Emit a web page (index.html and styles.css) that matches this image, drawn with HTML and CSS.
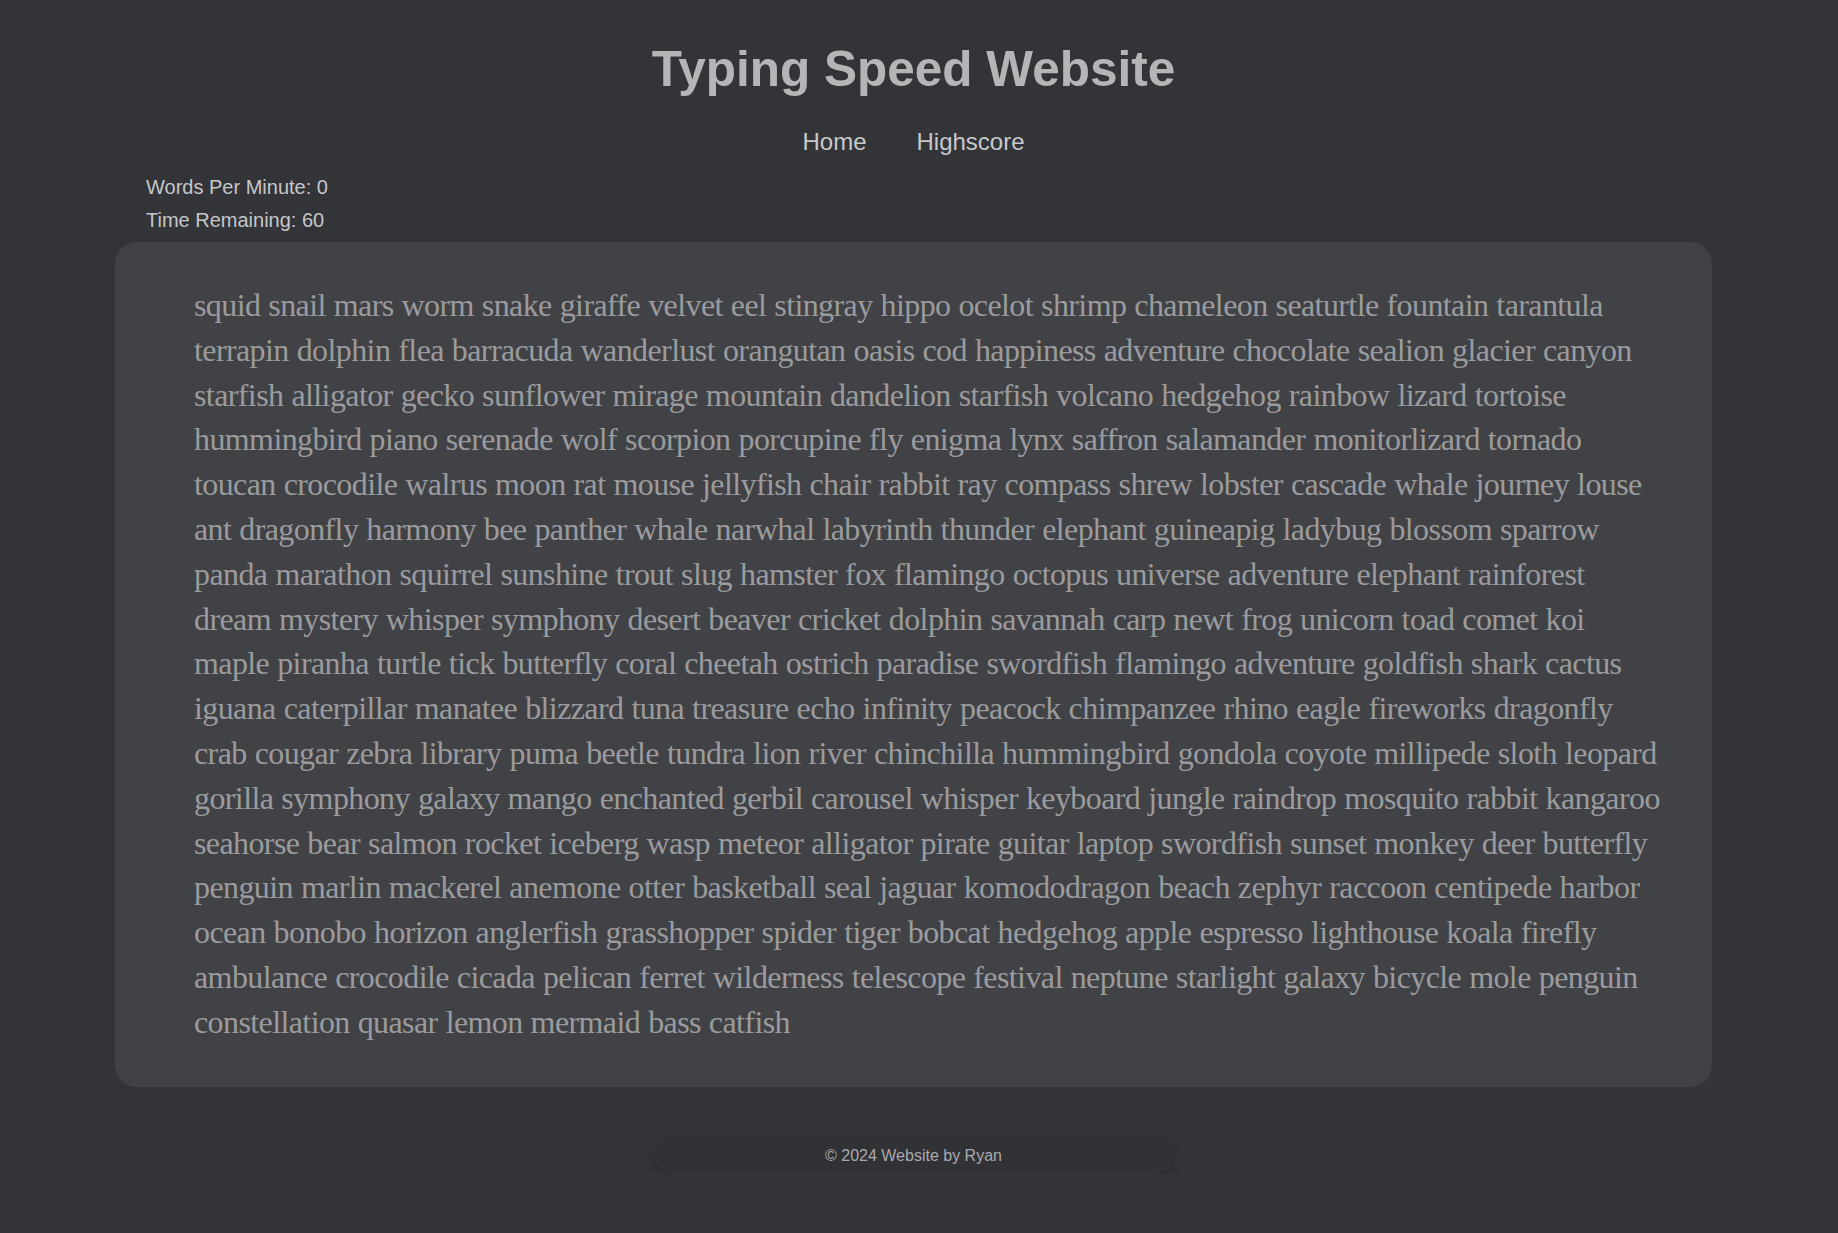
FILE: index.html
```html
<!DOCTYPE html>
<html lang="en">
<head>
<meta charset="utf-8">
<title>Typing Speed Website</title>
<link rel="stylesheet" href="styles.css">
</head>
<body>
<header class="site-header">
  <h1 class="title">Typing Speed Website</h1>
  <nav class="nav">
    <a class="nav-link" href="#">Home</a>
    <a class="nav-link" href="#">Highscore</a>
  </nav>
</header>
<main class="main">
  <div class="stats">
    <div class="stat">Words Per Minute: 0</div>
    <div class="stat">Time Remaining: 60</div>
  </div>
  <section class="words-box">
    <p class="words">squid snail mars worm snake giraffe velvet eel stingray hippo ocelot shrimp chameleon seaturtle fountain tarantula terrapin dolphin flea barracuda wanderlust orangutan oasis cod happiness adventure chocolate sealion glacier canyon starfish alligator gecko sunflower mirage mountain dandelion starfish volcano hedgehog rainbow lizard tortoise hummingbird piano serenade wolf scorpion porcupine fly enigma lynx saffron salamander monitorlizard tornado toucan crocodile walrus moon rat mouse jellyfish chair rabbit ray compass shrew lobster cascade whale journey louse ant dragonfly harmony bee panther whale narwhal labyrinth thunder elephant guineapig ladybug blossom sparrow panda marathon squirrel sunshine trout slug hamster fox flamingo octopus universe adventure elephant rainforest dream mystery whisper symphony desert beaver cricket dolphin savannah carp newt frog unicorn toad comet koi maple piranha turtle tick butterfly coral cheetah ostrich paradise swordfish flamingo adventure goldfish shark cactus iguana caterpillar manatee blizzard tuna treasure echo infinity peacock chimpanzee rhino eagle fireworks dragonfly crab cougar zebra library puma beetle tundra lion river chinchilla hummingbird gondola coyote millipede sloth leopard gorilla symphony galaxy mango enchanted gerbil carousel whisper keyboard jungle raindrop mosquito rabbit kangaroo seahorse bear salmon rocket iceberg wasp meteor alligator pirate guitar laptop swordfish sunset monkey deer butterfly penguin marlin mackerel anemone otter basketball seal jaguar komododragon beach zephyr raccoon centipede harbor ocean bonobo horizon anglerfish grasshopper spider tiger bobcat hedgehog apple espresso lighthouse koala firefly ambulance crocodile cicada pelican ferret wilderness telescope festival neptune starlight galaxy bicycle mole penguin constellation quasar lemon mermaid bass catfish</p>
  </section>
</main>
<footer class="footer">
  <div class="footer-box">© 2024 Website by Ryan</div>
</footer>
</body>
</html>
```

FILE: styles.css
```css
html {
  background: #333438;
}

body {
  margin: 8px 19px 8px 8px;
  font-family: "Liberation Sans", Arial, sans-serif;
  color: #c4c4c6;
}

.site-header {
  display: flex;
  flex-direction: column;
  align-items: center;
}

.title {
  margin: 32px 0 0;
  font-size: 49.5px;
  font-weight: bold;
  color: #b5b5b8;
}

.nav {
  display: flex;
  gap: 50px;
  margin-top: 31px;
}

.nav-link {
  font-size: 24px;
  color: #c8c8cb;
  text-decoration: none;
}

.stats {
  margin: 20px 0 0 138px;
  font-size: 20px;
  color: #c6c6c8;
}

.stat {
  line-height: 23px;
}

.stat + .stat {
  margin-top: 10px;
}

.words-box {
  margin: 10px 107px 0;
  padding: 41px 48px 42px 79px;
  background: #414246;
  border-radius: 22px;
}

.words {
  margin: 0;
  font-family: "Liberation Serif", "Times New Roman", serif;
  font-size: 32px;
  line-height: 44.8px;
  letter-spacing: -0.6px;
  word-spacing: 0.6px;
  color: #9b9b9d;
}

.footer {
  display: flex;
  justify-content: center;
  margin-top: 52px;
}

.footer-box {
  width: 520px;
  padding: 8px 0;
  text-align: center;
  font-size: 16px;
  color: #a9a9ac;
  background: #313236;
  border-radius: 18px;
  box-shadow: 0 4px 8px rgba(0, 0, 0, 0.18);
}
```
